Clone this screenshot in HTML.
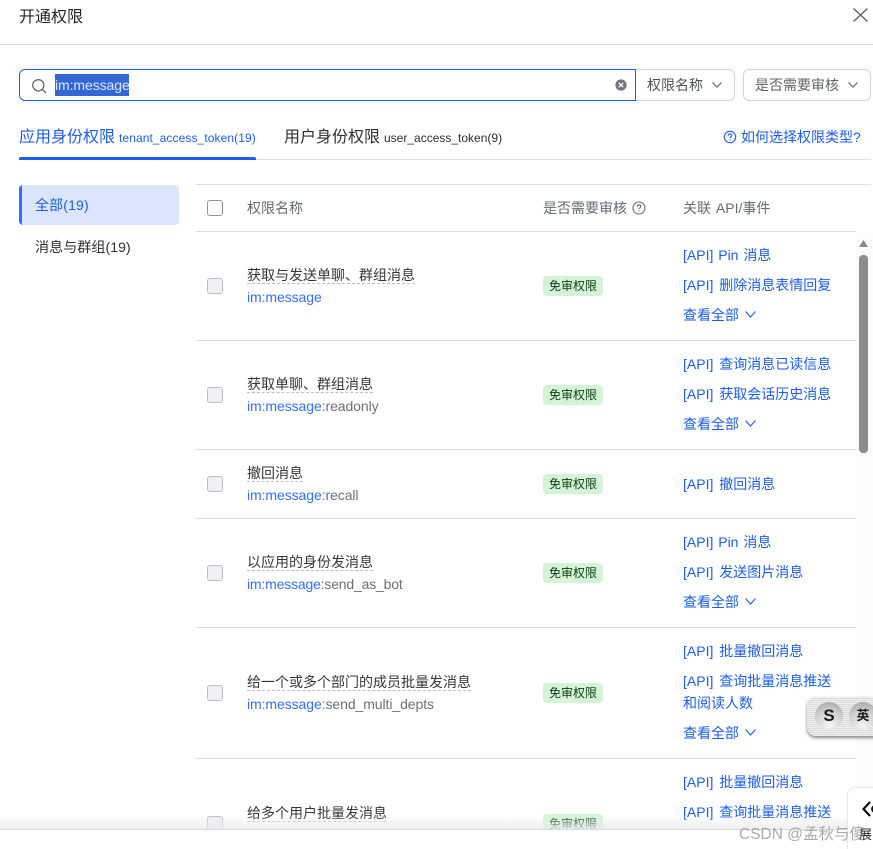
<!DOCTYPE html>
<html lang="zh"><head><meta charset="utf-8">
<style>
html,body{margin:0;padding:0;background:#fff;width:873px;height:849px;overflow:hidden}
#r{width:873px;height:849px;position:relative;overflow:hidden;font-family:"Liberation Sans","Noto Sans CJK SC",sans-serif;font-size:14px;color:#1f2329}
.a{position:absolute;white-space:nowrap}
.l{position:absolute;height:1px;background:#dee0e3}
.t{left:247px;font-size:14px;line-height:20px;color:#33373d;height:18px;border-bottom:1px dashed #bbbfc4;overflow:visible}
.k{left:247px;font-size:14px;line-height:20px;color:#6b7078;letter-spacing:-.08px}
.k b{font-weight:400;color:#3370ff}
.cb{position:absolute;left:207px;width:14px;height:14px;background:#eff0f1;border:1px solid #bbbfc4;border-radius:3px}
.tag{position:absolute;left:543px;width:60px;height:20px;background:#d5f3d6;border-radius:4px;font-size:12px;line-height:20px;text-align:center;color:#0b3d14}
.api{left:683px;font-size:14px;line-height:20px;color:#1d5ee8;word-spacing:2px}
.th{font-size:14px;line-height:20px;color:#646a73}
svg{position:absolute;overflow:visible}
</style></head><body><div id="r">

<div class="a" style="left:19px;top:6px;font-size:16px;line-height:24px;color:#1f2329">开通权限</div>
<svg style="left:853px;top:8px" width="15" height="14" fill="none" stroke="#5f6368" stroke-width="1.4"><path d="M.5 .5L14.500 13.500M14.500 .5L.5 13.500"/></svg>
<div class="l" style="left:0;top:44px;width:873px"></div>

<!-- search -->
<div class="a" style="left:19px;top:69px;width:615px;height:30px;border:1px solid #1d5ee8;border-radius:6px 0 0 6px"></div>
<svg style="left:32px;top:79px" width="14" height="14" fill="none" stroke="#646a73" stroke-width="1.3"><circle cx="6.300" cy="6.300" r="5.600"/><path d="M10.500 10.500L14 14"/></svg>
<div class="a" style="left:55px;top:74px;width:74px;height:22px;background:#3367d6"></div>
<div class="a" style="left:55px;top:75px;font-size:14px;line-height:20px;color:#dfe6f7;letter-spacing:-.08px">im:message</div>
<svg style="left:615px;top:79px" width="12" height="12"><circle cx="6" cy="6" r="5.6" fill="#70757c"/><path d="M3.800 3.800L8.200 8.200M8.200 3.800L3.800 8.200" stroke="#fff" stroke-width="1.3"/></svg>
<div class="a" style="left:636px;top:69px;width:98px;height:30px;border:1px solid #d0d3d6;border-left:0;border-radius:0 6px 6px 0"></div>
<div class="a" style="left:647px;top:75px;font-size:14px;line-height:20px;color:#4e5359">权限名称</div>
<svg style="left:712px;top:82px" width="10" height="6" fill="none" stroke="#646a73" stroke-width="1.2"><path d="M.5 .5L5 5L9.500 .5"/></svg>
<div class="a" style="left:743px;top:69px;width:126px;height:30px;border:1px solid #d0d3d6;border-radius:6px"></div>
<div class="a" style="left:755px;top:75px;font-size:14px;line-height:20px;color:#5f646b">是否需要审核</div>
<svg style="left:848px;top:82px" width="10" height="6" fill="none" stroke="#646a73" stroke-width="1.2"><path d="M.5 .5L5 5L9.500 .5"/></svg>

<!-- tabs -->
<div class="a" style="left:19px;top:127px;font-size:16px;line-height:22px;color:#1d5ee8">应用身份权限</div>
<div class="a" style="left:119px;top:127px;font-size:12px;line-height:22px;color:#1d5ee8;letter-spacing:.09px">tenant_access_token(19)</div>
<div class="a" style="left:284px;top:127px;font-size:16px;line-height:22px;color:#2b2f36">用户身份权限</div>
<div class="a" style="left:384px;top:127px;font-size:12px;line-height:22px;color:#2b2f36">user_access_token(9)</div>
<svg style="left:723px;top:130px" width="14" height="14" fill="none" stroke="#1d5ee8" stroke-width="1.1"><circle cx="7" cy="7" r="5.700"/><path d="M5.200 5.600C5.200 3.400 8.800 3.500 8.800 5.500C8.800 6.800 7 6.800 7 8.300"/><path d="M7 9.500V10.600"/></svg>
<div class="a" style="left:741px;top:127px;font-size:14px;line-height:20px;color:#1d5ee8">如何选择权限类型?</div>
<div class="l" style="left:19px;top:159px;width:852px"></div>
<div class="a" style="left:19px;top:157px;width:237px;height:3px;background:#1d5ee8;border-radius:2px 2px 0 0"></div>

<!-- side -->
<div class="a" style="left:19px;top:185px;width:160px;height:40px;background:#dbe6fd;border-radius:4px;overflow:hidden"><div style="width:3px;height:40px;background:#3370ff"></div></div>
<div class="a" style="left:35px;top:195px;font-size:14px;line-height:20px;color:#1d5ee8;letter-spacing:.15px">全部(19)</div>
<div class="a" style="left:35px;top:237px;font-size:14px;line-height:20px;color:#2b2f36;letter-spacing:.1px">消息与群组(19)</div>

<!-- table head -->
<div class="l" style="left:195px;top:184px;width:676px"></div>
<div class="a" style="left:207px;top:200px;width:14px;height:14px;border:1px solid #8f959e;border-radius:3px;background:#fff"></div>
<div class="a th" style="left:247px;top:198px">权限名称</div>
<div class="a th" style="left:543px;top:198px">是否需要审核</div>
<svg style="left:632px;top:201px" width="14" height="14" fill="none" stroke="#646a73" stroke-width="1.1"><circle cx="7" cy="7" r="6"/><path d="M5.200 5.600C5.200 3.400 8.800 3.500 8.800 5.500C8.800 6.800 7 6.800 7 8.300"/><path d="M7 9.500V10.600"/></svg>
<div class="a th" style="left:683px;top:198px;word-spacing:1px">关联 API/事件</div>
<div class="l" style="left:195px;top:231px;width:661px"></div>

<!-- row1 -->
<div class="cb" style="top:278px"></div>
<div class="a t" style="top:265px">获取与发送单聊、群组消息</div>
<div class="a k" style="top:287px"><b>im:message</b></div>
<div class="tag" style="top:276px">免审权限</div>
<div class="a api" style="top:245px;word-spacing:1px">[API] Pin 消息</div>
<div class="a api" style="top:275px">[API] 删除消息表情回复</div>
<div class="a api" style="top:305px">查看全部</div>
<svg style="left:745px;top:311px" width="11" height="7" fill="none" stroke="#1d5ee8" stroke-width="1.1"><path d="M.5 .5L5.500 6L10.500 .5"/></svg>
<div class="l" style="left:195px;top:340px;width:661px"></div>

<!-- row2 -->
<div class="cb" style="top:387px"></div>
<div class="a t" style="top:374px">获取单聊、群组消息</div>
<div class="a k" style="top:396px"><b>im:message</b>:readonly</div>
<div class="tag" style="top:385px">免审权限</div>
<div class="a api" style="top:354px">[API] 查询消息已读信息</div>
<div class="a api" style="top:384px">[API] 获取会话历史消息</div>
<div class="a api" style="top:414px">查看全部</div>
<svg style="left:745px;top:420px" width="11" height="7" fill="none" stroke="#1d5ee8" stroke-width="1.1"><path d="M.5 .5L5.500 6L10.500 .5"/></svg>
<div class="l" style="left:195px;top:449px;width:661px"></div>

<!-- row3 -->
<div class="cb" style="top:476px"></div>
<div class="a t" style="top:463px">撤回消息</div>
<div class="a k" style="top:485px"><b>im:message</b>:recall</div>
<div class="tag" style="top:474px">免审权限</div>
<div class="a api" style="top:474px">[API] 撤回消息</div>
<div class="l" style="left:195px;top:518px;width:661px"></div>

<!-- row4 -->
<div class="cb" style="top:565px"></div>
<div class="a t" style="top:552px">以应用的身份发消息</div>
<div class="a k" style="top:574px;letter-spacing:-.18px"><b>im:message</b>:send_as_bot</div>
<div class="tag" style="top:563px">免审权限</div>
<div class="a api" style="top:532px;word-spacing:1px">[API] Pin 消息</div>
<div class="a api" style="top:562px">[API] 发送图片消息</div>
<div class="a api" style="top:592px">查看全部</div>
<svg style="left:745px;top:598px" width="11" height="7" fill="none" stroke="#1d5ee8" stroke-width="1.1"><path d="M.5 .5L5.500 6L10.500 .5"/></svg>
<div class="l" style="left:195px;top:627px;width:661px"></div>

<!-- row5 -->
<div class="cb" style="top:685px"></div>
<div class="a t" style="top:672px">给一个或多个部门的成员批量发消息</div>
<div class="a k" style="top:694px"><b>im:message</b>:send_multi_depts</div>
<div class="tag" style="top:683px">免审权限</div>
<div class="a api" style="top:641px">[API] 批量撤回消息</div>
<div class="a api" style="top:671px">[API] 查询批量消息推送</div>
<div class="a api" style="top:693px">和阅读人数</div>
<div class="a api" style="top:723px">查看全部</div>
<svg style="left:745px;top:729px" width="11" height="7" fill="none" stroke="#1d5ee8" stroke-width="1.1"><path d="M.5 .5L5.500 6L10.500 .5"/></svg>
<div class="l" style="left:195px;top:758px;width:661px"></div>

<!-- row6 -->
<div class="cb" style="top:816px"></div>
<div class="a t" style="top:803px">给多个用户批量发消息</div>
<div class="tag" style="top:814px">免审权限</div>
<div class="a api" style="top:772px">[API] 批量撤回消息</div>
<div class="a api" style="top:802px">[API] 查询批量消息推送</div>

<!-- scrollbar -->
<div class="a" style="left:856px;top:232px;width:17px;height:597px;background:#fbfbfb"></div>
<svg style="left:859px;top:240px" width="9" height="7"><path d="M4.500 0L9 7H0Z" fill="#8a8a8a"/></svg>
<div class="a" style="left:859px;top:255px;width:9px;height:198px;background:#8c8c8c;border-radius:4px"></div>

<!-- footer -->
<div class="a" style="left:0;top:815px;width:873px;height:14px;background:linear-gradient(rgba(235,236,238,0),rgba(235,236,238,.85))"></div>
<div class="a" style="left:0;top:829px;width:873px;height:20px;background:#fff;border-top:1px solid #d8dadd"></div>

<!-- IME bar -->
<div class="a" style="left:807px;top:697px;width:80px;height:39px;border-radius:9px;background:repeating-linear-gradient(#eeeeee 0 1px,#dcdcdc 1px 2px);box-shadow:0 2px 3px #888"></div>
<div class="a" style="left:815px;top:702px;width:28px;height:28px;border-radius:50%;background:radial-gradient(circle at 50% 85%,#f6f6f6,#cfcfcf 55%,#9c9c9c);text-align:center;font-size:17px;line-height:28px;font-weight:700;color:#1a1a1a">S</div>
<div class="a" style="left:849px;top:702px;width:28px;height:28px;border-radius:50%;background:radial-gradient(circle at 50% 85%,#f6f6f6,#cfcfcf 55%,#9c9c9c);text-align:center;font-size:13px;line-height:28px;font-weight:700;color:#1a1a1a">英</div>

<!-- side widget -->
<div class="a" style="left:847px;top:787px;width:40px;height:70px;background:#fff;border:1px solid #e6e6e6;border-radius:8px"></div>
<svg style="left:862px;top:801px" width="11" height="16" fill="none" stroke="#111" stroke-width="2.200"><path d="M8 1L1.500 8L8 15"/><circle cx="13" cy="8" r="2.800"/></svg>
<div class="a" style="left:859px;top:826px;font-size:13px;line-height:18px;color:#222">展</div>

<!-- watermark -->
<div class="a" style="left:739px;top:825px;font-size:15.500px;line-height:20px;color:rgba(120,120,120,.62)">CSDN @孟秋与傻</div>

</div></body></html>
